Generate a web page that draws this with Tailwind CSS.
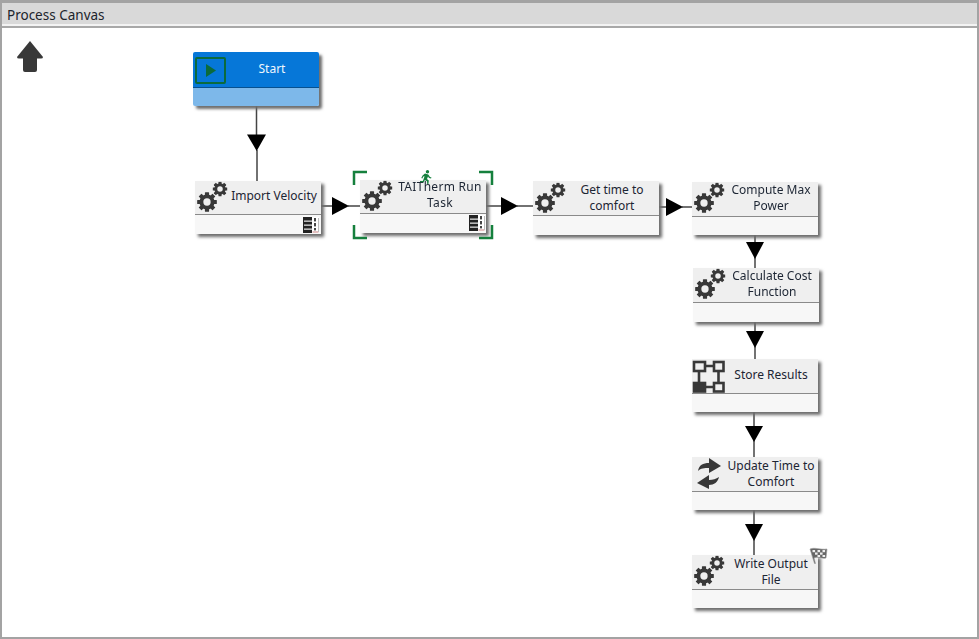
<!DOCTYPE html>
<html lang="en">
<head>
  <meta charset="UTF-8" />
  <title>Process Canvas</title>
  <script src="https://cdn.jsdelivr.net/npm/@tailwindcss/browser@4"></script>
</head>
<body class="bg-white font-['Noto_Sans',sans-serif] text-[12px] leading-[16px] text-[#1c2533] overflow-hidden">
  <svg class="hidden">
    <defs>
      <symbol id="gear" viewBox="-12 -12 24 24">
        <circle r="6.8" fill="none" stroke="#383838" stroke-width="4.6"/>
        <g fill="#383838">
          <rect x="-2.5" y="-11.8" width="5" height="23.6" rx="0.6"/>
          <rect x="-2.5" y="-11.8" width="5" height="23.6" rx="0.6" transform="rotate(45)"/>
          <rect x="-2.5" y="-11.8" width="5" height="23.6" rx="0.6" transform="rotate(90)"/>
          <rect x="-2.5" y="-11.8" width="5" height="23.6" rx="0.6" transform="rotate(135)"/>
        </g>
        <circle r="4.4" fill="#efefef"/>
      </symbol>
      <symbol id="gears" viewBox="0 0 36 34">
        <use href="#gear" x="2" y="11" width="20" height="20"/>
        <use href="#gear" x="17.500" y="0.500" width="15" height="15"/>
      </symbol>
      <symbol id="tool" viewBox="0 0 16 16">
        <rect width="16" height="16" fill="#fff"/>
        <rect x="0" y="0" width="9" height="16" fill="#222"/>
        <g fill="#ddd">
          <rect x="1" y="3.5" width="8" height="1.3"/>
          <rect x="1" y="7.5" width="8" height="1.3"/>
          <rect x="1" y="11.5" width="8" height="1.3"/>
        </g>
        <g fill="#444">
          <rect x="11" y="1" width="2" height="3.4"/>
          <rect x="11" y="6" width="2" height="3.4"/>
          <rect x="11" y="11" width="2" height="2.4"/>
        </g>
        <rect x="9.5" y="14.5" width="6" height="1" fill="#c98080"/>
        <rect x="15" y="1" width="1" height="14" fill="#bbb"/>
      </symbol>
    </defs>
  </svg>

  <div class="relative flex h-[639px] w-[979px] flex-col border-x-2 border-b-2 border-[#a3a3a3]">
    <!-- Title bar -->
    <div class="flex h-[28px] flex-col border-t-[3px] border-b-2 border-t-[#a3a3a3] border-b-[#a8a8a8] bg-[#f3f3f3]">
      <div class="h-[21px] bg-[#d9d9d9] pl-[5px] text-[13.5px] leading-[24px] text-[#20242c]">Process Canvas</div>
    </div>
    <div class="flex-1 bg-white"></div>
  </div>

  <!-- Canvas contents -->
  <div class="absolute left-0 top-0 h-[639px] w-[979px] blur-[0.35px]">
    <!-- Up arrow -->
    <svg class="absolute left-[16px] top-[40px]" width="28" height="33" viewBox="0 0 28 33">
      <path d="M14 1 L27 17 Q27 18.5 25 18.5 L21 18.5 L21 30 Q21 32 19 32 L9 32 Q7 32 7 30 L7 18.5 L3 18.5 Q1 18.5 1 17 Z" fill="#383838"/>
    </svg>

    <!-- Connectors -->
    <svg class="absolute left-0 top-0" width="979" height="639" viewBox="0 0 979 639">
      <g stroke="#444" stroke-width="1.5" fill="none">
        <path d="M256.5 106V140M257 150V181"/>
        <path d="M321 206H334M348 206H360"/>
        <path d="M486 206H503M517 206H533"/>
        <path d="M659 207H668M682 207H692"/>
        <path d="M755 235V268"/>
        <path d="M755 322V359"/>
        <path d="M754 412V457"/>
        <path d="M754 510V555"/>
      </g>
      <g fill="#000">
        <path d="M247 134.5H266L256.7 151Z"/>
        <path d="M332 197L349 206L332 215Z"/>
        <path d="M501 197L518 206L501 215Z"/>
        <path d="M666 198L683 207L666 216Z"/>
        <path d="M746 242H764L755 259Z"/>
        <path d="M746 331H764L755 348Z"/>
        <path d="M745 426H763L754 442Z"/>
        <path d="M745 524H763L754 541Z"/>
      </g>
    </svg>

    <!-- Start -->
    <div class="absolute left-[193px] top-[52px] flex h-[54px] w-[126px] flex-col overflow-visible rounded-[2px] shadow-[3px_3px_3px_#6e6e6e]">
      <div class="flex h-[36px] items-center justify-center rounded-t-[2px] border-b border-[#07508f] bg-[#0677d8] pb-[2px] pl-[33px] pr-[1px] text-[#eef6fd]">Start</div>
      <div class="flex-1 rounded-b-[2px] bg-[#7db8ea]"></div>
      <div class="absolute left-[2px] top-[5px] flex h-[27px] w-[31px] items-center justify-center rounded-[2px] border-[2.5px] border-[#0b6b3c]">
        <svg width="10" height="13" viewBox="0 0 10 13"><path d="M0 0L10 6.5L0 13Z" fill="#0b6b3c"/></svg>
      </div>
    </div>

    <!-- Import Velocity -->
    <div class="absolute left-[195px] top-[181px] flex h-[53px] w-[126px] flex-col bg-[#f7f7f7] shadow-[3px_3px_3px_#6e6e6e]">
      <div class="flex h-[34px] items-center justify-center border-b border-[#8a8a8a] bg-[#efefef] pb-[3px] pl-[33px] pr-[1px]">Import Velocity</div>
      <svg class="absolute left-0 top-0 h-[34px] w-[36px]"><use href="#gears"/></svg>
      <svg class="absolute left-[108px] top-[36px] h-[16px] w-[16px]"><use href="#tool"/></svg>
    </div>

    <!-- TAItherm Run Task -->
    <div class="absolute left-[360px] top-[180px] flex h-[53px] w-[126px] flex-col bg-[#f7f7f7] shadow-[3px_3px_3px_#6e6e6e]">
      <div class="flex h-[34px] items-center justify-center border-b border-[#8a8a8a] bg-[#efefef] pb-[4px] pl-[35px] pr-[1px] text-center tracking-[0.3px]">TAITherm Run<br />Task</div>
      <svg class="absolute left-0 top-0 h-[34px] w-[36px]"><use href="#gears"/></svg>
      <svg class="absolute left-[109px] top-[35px] h-[16px] w-[16px]"><use href="#tool"/></svg>
    </div>
    <svg class="absolute left-[352px] top-[170px]" width="142" height="70" viewBox="0 0 142 70" fill="none" stroke="#15803d" stroke-width="2.5">
      <path d="M15 2H2V15M127 2H140V15M2 55V68H15M140 55V68H127"/>
    </svg>
    <svg class="absolute left-[419px] top-[170px]" width="13" height="14" viewBox="0 0 13 14" fill="#15803d">
      <circle cx="8.5" cy="1.8" r="1.7"/>
      <path d="M6 3.6L9.3 4.5L11 7L12.5 7.6L12 8.6L10 7.9L9 6.6L8 9L9.8 10.5L9.4 14H8.2L8 11.3L5.8 10L4.7 12.3L1 12.2V11H3.9L5.6 6.2L4.3 6.6L3.3 8.4L2.3 7.9L3.6 5.5Z"/>
    </svg>

    <!-- Get time to comfort -->
    <div class="absolute left-[533px] top-[181px] flex h-[54px] w-[126px] flex-col bg-[#f7f7f7] shadow-[3px_3px_3px_#6e6e6e]">
      <div class="flex h-[35px] items-center justify-center border-b border-[#8a8a8a] bg-[#efefef] pl-[33px] pr-[1px] text-center">Get time to<br />comfort</div>
      <svg class="absolute left-0 top-[1px] h-[34px] w-[36px]"><use href="#gears"/></svg>
    </div>

    <!-- Compute Max Power -->
    <div class="absolute left-[692px] top-[182px] flex h-[53px] w-[126px] flex-col bg-[#f7f7f7] shadow-[3px_3px_3px_#6e6e6e]">
      <div class="flex h-[35px] items-center justify-center border-b border-[#8a8a8a] bg-[#efefef] pb-[3px] pl-[33px] pr-[1px] text-center">Compute Max<br />Power</div>
      <svg class="absolute left-0 top-0 h-[34px] w-[36px]"><use href="#gears"/></svg>
    </div>

    <!-- Calculate Cost Function -->
    <div class="absolute left-[693px] top-[268px] flex h-[54px] w-[126px] flex-col bg-[#f7f7f7] shadow-[3px_3px_3px_#6e6e6e]">
      <div class="flex h-[35px] items-center justify-center border-b border-[#8a8a8a] bg-[#efefef] pb-[3px] pl-[33px] pr-[1px] text-center">Calculate Cost<br />Function</div>
      <svg class="absolute left-0 top-0 h-[34px] w-[36px]"><use href="#gears"/></svg>
    </div>

    <!-- Store Results -->
    <div class="absolute left-[692px] top-[359px] flex h-[53px] w-[126px] flex-col bg-[#f7f7f7] shadow-[3px_3px_3px_#6e6e6e]">
      <div class="flex h-[35px] items-center justify-center border-b border-[#8a8a8a] bg-[#efefef] pb-[3px] pl-[33px] pr-[1px]">Store Results</div>
      <svg class="absolute left-0 top-0" width="34" height="34" viewBox="0 0 34 34" fill="none" stroke="#383838" stroke-width="2.6">
        <path d="M13 7H22M7 12V24M26.500 12V24M13 28H22"/>
        <rect x="2" y="3" width="11" height="9"/>
        <rect x="22" y="3" width="9.500" height="9"/>
        <rect x="2" y="24" width="11" height="8.500" fill="#383838"/>
        <rect x="22" y="24" width="9.500" height="8.500"/>
      </svg>
    </div>

    <!-- Update Time to Comfort -->
    <div class="absolute left-[692px] top-[457px] flex h-[53px] w-[126px] flex-col bg-[#f7f7f7] shadow-[3px_3px_3px_#6e6e6e]">
      <div class="flex h-[35px] items-center justify-center border-b border-[#8a8a8a] bg-[#efefef] pb-[1px] pl-[33px] pr-[1px] text-center">Update Time to<br />Comfort</div>
      <svg class="absolute left-0 top-0" width="34" height="34" viewBox="0 0 34 34" fill="#383838">
        <path d="M6 14C7 8 11 6 17 6L17 1L29 9L17 16L17 11C12 11 9 11 6 14Z"/>
        <path d="M17 18L5 26L17 32L17 28C22 28 26 25 27 20C24 22 21 23 17 23Z"/>
      </svg>
    </div>

    <!-- Write Output File -->
    <div class="absolute left-[692px] top-[555px] flex h-[53px] w-[126px] flex-col bg-[#f7f7f7] shadow-[3px_3px_3px_#6e6e6e]">
      <div class="flex h-[35px] items-center justify-center border-b border-[#8a8a8a] bg-[#efefef] pb-[1px] pl-[33px] pr-[1px] text-center">Write Output<br />File</div>
      <svg class="absolute left-0 top-0 h-[34px] w-[36px]"><use href="#gears"/></svg>
    </div>
    <svg class="absolute left-[809px] top-[547px]" width="20" height="17" viewBox="0 0 20 17">
      <path d="M1 2C6 0 11 3 18 2L17 11C12 12 9 9 5 11L6.500 16.500H5.500Z" fill="#666" stroke="#999" stroke-width="0.6"/>
      <g fill="#eee">
        <rect x="3.500" y="3" width="2.600" height="2.200"/>
        <rect x="8.500" y="3" width="2.600" height="2.200"/>
        <rect x="13.500" y="3" width="2.600" height="2.200"/>
        <rect x="6" y="5.500" width="2.600" height="2.200"/>
        <rect x="11" y="5.500" width="2.600" height="2.200"/>
        <rect x="8.500" y="8" width="2.600" height="2"/>
        <rect x="13.500" y="8" width="2.600" height="2"/>
      </g>
    </svg>
  </div>
</body>
</html>
